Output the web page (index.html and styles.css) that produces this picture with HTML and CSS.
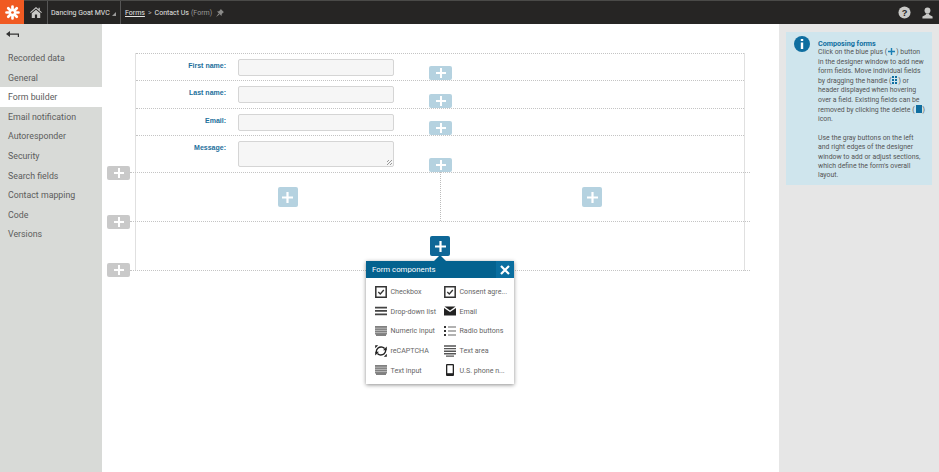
FILE: index.html
```html
<!DOCTYPE html>
<html lang="en">
<head>
    <meta charset="UTF-8">
    <title>Contact Us (Form)</title>
    <link rel="stylesheet" href="styles.css">
</head>
<body>

<header class="topbar">
    <div class="logo">
        <svg width="15" height="15" viewBox="0 0 20 20"><g stroke="#fff" stroke-width="3.600" stroke-linecap="round"><path d="M10 2v16M2 10h16M4.300 4.300l11.400 11.400M15.700 4.300L4.300 15.700"/></g><circle cx="10" cy="10" r="1.800" fill="#f05a22"/></svg>
    </div>
    <div class="home">
        <svg width="12" height="11" viewBox="0 0 14 13"><path d="M7 0L0 6.200l.8.900L7 1.800l6.200 5.300.8-.9L11.500 4V1H10v1.700z" fill="#c9c9c7"/><path d="M2 7.500L7 3.200l5 4.300V13H8.300V9H5.700v4H2z" fill="#c9c9c7"/></svg>
    </div>
    <div class="site">Dancing Goat MVC <span class="caret"></span></div>
    <div class="crumbs">
        <a href="#">Forms</a>
        <span class="sep">&gt;</span>
        <span>Contact Us</span>
        <span class="muted">(Form)</span>
        <svg width="8" height="8" viewBox="0 0 8 8"><path d="M4.800 0L8 3.200 7.200 3.600 5.800 5 5.500 7 1 2.500 3 2.200 4.400.8zM2.500 4.500L3.500 5.500 0 8z" fill="#8a8a88"/></svg>
    </div>
    <div class="top-icons">
        <svg width="13" height="13" viewBox="0 0 14 14"><circle cx="7" cy="7" r="6.500" fill="#c9c9c7"/><text x="7" y="10.500" class="q-mark">?</text></svg>
        <svg width="11" height="12" viewBox="0 0 13 14"><circle cx="6.500" cy="4" r="3.500" fill="#c9c9c7"/><path d="M4.500 7.500h4v1.500l4 2v2.500H.5V11l4-2z" fill="#c9c9c7"/></svg>
    </div>
</header>

<div class="page">
    <nav class="sidebar">
        <div class="back">
            <svg width="13" height="8" viewBox="0 0 13 8"><path d="M4 0L0 3l4 3V3.800h7.800V6H13V2.600H4z" fill="#333"/></svg>
        </div>
        <a href="#">Recorded data</a>
        <a href="#">General</a>
        <a href="#" class="active">Form builder</a>
        <a href="#">Email notification</a>
        <a href="#">Autoresponder</a>
        <a href="#">Security</a>
        <a href="#">Search fields</a>
        <a href="#">Contact mapping</a>
        <a href="#">Code</a>
        <a href="#">Versions</a>
    </nav>

    <main class="designer">
        <div class="canvas">
            <div class="field h27">
                <label>First name:</label><div class="input"></div>
                <button class="plus light field-plus"><svg class="ico-plus" viewBox="0 0 10 10"><path d="M4 0h2v4h4v2H6v4H4V6H0V4h4z"/></svg></button>
            </div>
            <div class="field h27">
                <label>Last name:</label><div class="input"></div>
                <button class="plus light field-plus"><svg class="ico-plus" viewBox="0 0 10 10"><path d="M4 0h2v4h4v2H6v4H4V6H0V4h4z"/></svg></button>
            </div>
            <div class="field h27">
                <label>Email:</label><div class="input"></div>
                <button class="plus light field-plus"><svg class="ico-plus" viewBox="0 0 10 10"><path d="M4 0h2v4h4v2H6v4H4V6H0V4h4z"/></svg></button>
            </div>
            <div class="field h37">
                <label>Message:</label><div class="input area"><span class="grip"></span></div>
                <button class="plus light field-plus"><svg class="ico-plus" viewBox="0 0 10 10"><path d="M4 0h2v4h4v2H6v4H4V6H0V4h4z"/></svg></button>
            </div>
            <div class="section two">
                <div class="zone"><button class="plus light tall"><svg class="ico-plus" viewBox="0 0 10 10"><path d="M4 0h2v4h4v2H6v4H4V6H0V4h4z"/></svg></button></div>
                <div class="zone split"><button class="plus light tall"><svg class="ico-plus" viewBox="0 0 10 10"><path d="M4 0h2v4h4v2H6v4H4V6H0V4h4z"/></svg></button></div>
                <button class="plus gray side s1"><svg class="ico-plus" viewBox="0 0 10 10"><path d="M4 0h2v4h4v2H6v4H4V6H0V4h4z"/></svg></button>
            </div>
            <div class="section one">
                <button class="plus dark tall"><svg class="ico-plus" viewBox="0 0 10 10"><path d="M4 0h2v4h4v2H6v4H4V6H0V4h4z"/></svg></button>
                <button class="plus gray side s2"><svg class="ico-plus" viewBox="0 0 10 10"><path d="M4 0h2v4h4v2H6v4H4V6H0V4h4z"/></svg></button>
                <button class="plus gray side s3"><svg class="ico-plus" viewBox="0 0 10 10"><path d="M4 0h2v4h4v2H6v4H4V6H0V4h4z"/></svg></button>
            </div>

            <div class="popup">
                <div class="popup-head">
                    <span>Form components</span>
                    <div class="popup-close"><svg width="10" height="10" viewBox="0 0 10 10"><path d="M1 1l8 8M9 1L1 9" stroke="#fff" stroke-width="2.200"/></svg></div>
                </div>
                <div class="popup-grid">
                    <div class="comp"><svg viewBox="0 0 12 12"><path d="M.8.800h10.400v10.400H.8z" fill="none" stroke="#333" stroke-width="1.500"/><path d="M3.300 6l2 2 3.500-4" fill="none" stroke="#333" stroke-width="1.300"/></svg>Checkbox</div>
                    <div class="comp"><svg viewBox="0 0 12 12"><path d="M.8.800h10.400v10.400H.8z" fill="none" stroke="#333" stroke-width="1.500"/><path d="M3.300 6l2 2 3.500-4" fill="none" stroke="#333" stroke-width="1.300"/></svg>Consent agre...</div>
                    <div class="comp"><svg viewBox="0 0 12 12"><path d="M0 1.800h12v1.700H0zM0 5.100h12v1.700H0zM0 8.500h12v1.700H0z" fill="#444"/></svg>Drop-down list</div>
                    <div class="comp"><svg viewBox="0 0 12 12"><path d="M0 3l6 4 6-4v7.500H0z" fill="#222"/><path d="M.5 1.500h11L6 5.500z" fill="#222"/></svg>Email</div>
                    <div class="comp"><svg viewBox="0 0 12 12"><path d="M0 1h12v8.500H0zM1 9.500h10V11H1z" fill="#808080"/><path d="M0 3.200h12M0 5.400h12M0 7.600h12" stroke="#ddd" stroke-width=".6"/></svg>Numeric input</div>
                    <div class="comp"><svg viewBox="0 0 12 12"><path d="M0 1h2v2H0zM0 5h2v2H0zM0 9h2v2H0z" fill="#333"/><path d="M4 1.500h8v1H4zM4 5.500h8v1H4zM4 9.500h8v1H4z" fill="#666"/></svg>Radio buttons</div>
                    <div class="comp"><svg viewBox="0 0 12 12"><g fill="none" stroke="#222" stroke-width="1.400"><path d="M1.300 7.200C1.100 4 3.600 1.600 7.200 2.100 8.300 2.300 9 2.800 9.600 3.400"/><path d="M10.700 4.800c.2 3.200-2.300 5.600-5.900 5.100-1.100-.2-1.800-.7-2.400-1.300"/></g><path d="M8 5.200h3.800V1.400zM4 6.800H.2v3.800zM.2.200h3l-3 3zM11.800 11.800h-3l3-3z" fill="#222"/></svg>reCAPTCHA</div>
                    <div class="comp"><svg viewBox="0 0 12 12"><path d="M0 .3h12v1.400H0zM0 2.900h12v1.400H0zM0 5.500h12v1.400H0zM0 8.100h12v1.400H0zM2 10.500h8v1.300H2z" fill="#555"/></svg>Text area</div>
                    <div class="comp"><svg viewBox="0 0 12 12"><path d="M0 1h12v8.500H0zM1 9.500h10V11H1z" fill="#808080"/><path d="M0 3.200h12M0 5.400h12M0 7.600h12" stroke="#ddd" stroke-width=".6"/></svg>Text input</div>
                    <div class="comp"><svg viewBox="0 0 12 12"><path d="M3 0h6a1 1 0 0 1 1 1v10a1 1 0 0 1-1 1H3a1 1 0 0 1-1-1V1a1 1 0 0 1 1-1z" fill="#222"/><path d="M3.300 1.300h5.400v7.900H3.300z" fill="#fff"/></svg>U.S. phone n...</div>
                </div>
            </div>
        </div>
    </main>

    <aside class="help-col">
        <div class="help">
            <div class="info-dot">
                <svg width="16" height="16" viewBox="0 0 16 16"><circle cx="8" cy="8" r="8" fill="#0f6ea0"/><path d="M6.800 3h2.400v2H6.800zM6.800 6.500h2.400V13H6.800z" fill="#fff"/></svg>
            </div>
            <div class="help-text">
                <h4>Composing forms</h4>
                <p>Click on the blue plus (<svg class="inline-ico" width="7" height="7" viewBox="0 0 10 10"><path d="M4 0h2v4h4v2H6v4H4V6H0V4h4z" fill="#1b7fb5"/></svg>) button<br>
                in the designer window to add new<br>
                form fields. Move individual fields<br>
                by dragging the handle (<svg class="inline-ico" width="5" height="8" viewBox="0 0 5 8"><path d="M0 0h2v2H0zM3 0h2v2H3zM0 3h2v2H0zM3 3h2v2H3zM0 6h2v2H0zM3 6h2v2H3z" fill="#0f6ea0"/></svg>) or<br>
                header displayed when hovering<br>
                over a field. Existing fields can be<br>
                removed by clicking the delete (<svg class="inline-ico" width="6" height="8" viewBox="0 0 6 8"><path d="M0 0h6v8H0z" fill="#0f6ea0"/></svg>)<br>
                icon.</p>
                <p>Use the gray buttons on the left<br>
                and right edges of the designer<br>
                window to add or adjust sections,<br>
                which define the form's overall<br>
                layout.</p>
            </div>
        </div>
    </aside>
</div>

</body>
</html>
```

FILE: styles.css
```css
* { box-sizing: border-box; }
html, body { height: 100%; }
body {
    margin: 0;
    font-family: Roboto, "Open Sans", sans-serif;
    background: #fff;
    overflow: hidden;
}

/* top bar */
.topbar {
    height: 24px;
    display: flex;
    align-items: stretch;
    background: #262524;
    border-top: 1px solid #4a4a48;
    color: #e4e4e2;
    font-size: 7px;
}
.logo {
    width: 24px;
    margin-top: -1px;
    background: #f05a22;
    display: flex;
    align-items: center;
    justify-content: center;
}
.home {
    width: 24px;
    display: flex;
    align-items: center;
    justify-content: center;
    border-right: 1px solid #555;
}
.site {
    width: 73px;
    padding-left: 3px;
    display: flex;
    align-items: center;
    gap: 2px;
    border-right: 1px solid #555;
    white-space: nowrap;
}
.caret {
    width: 0;
    height: 0;
    margin-top: 3px;
    border-left: 4px solid transparent;
    border-bottom: 4px solid #999;
}
.crumbs {
    display: flex;
    align-items: center;
    gap: 2px;
    padding-left: 4px;
}
.crumbs a { color: #e4e4e2; }
.crumbs .sep { color: #aaa; padding: 0 1px; }
.crumbs .muted { color: #9a9a98; }
.crumbs svg { margin-left: 2px; }
.top-icons {
    margin-left: auto;
    display: flex;
    align-items: center;
    gap: 11px;
    padding-right: 6px;
}
.q-mark {
    font-size: 10px;
    font-weight: 700;
    fill: #262524;
    text-anchor: middle;
    font-family: "Liberation Sans", sans-serif;
}

.page {
    display: flex;
    height: calc(100% - 24px);
}

/* left menu */
.sidebar {
    width: 102px;
    background: #d8dad7;
    flex-shrink: 0;
}
.back {
    height: 24px;
    padding: 7px 0 0 6px;
}
.back svg { display: block; }
.sidebar a {
    display: block;
    height: 19.600px;
    line-height: 20px;
    padding-left: 8px;
    font-size: 8.800px;
    color: #5c5c5c;
    text-decoration: none;
}
.sidebar a.active { background: #fff; }

/* designer */
.designer {
    flex: 1;
    padding: 29px 34px 0 33px;
}
.canvas {
    position: relative;
    width: 610px;
    border-left: 1px solid #e0e0e0;
    border-right: 1px solid #e0e0e0;
}
.field {
    position: relative;
    display: flex;
    gap: 12px;
    padding-top: 5px;
    border-top: 1px dotted #c4c4c4;
}
.h27 { height: 27.400px; }
.h37 { height: 37px; }
.field label {
    width: 90px;
    text-align: right;
    font-family: "Liberation Sans", sans-serif;
    font-size: 7px;
    font-weight: 700;
    color: #1c6f9c;
    padding-top: 3px;
}
.input {
    width: 156px;
    height: 17px;
    background: #f6f6f6;
    border: 1.500px solid #d5d5d5;
    border-radius: 2px;
}
.area {
    height: 26px;
    position: relative;
}
.grip {
    position: absolute;
    right: 1px;
    bottom: 1px;
    width: 5px;
    height: 5px;
    background: repeating-linear-gradient(135deg, transparent 0 1px, #999 1px 2px);
}
.plus {
    padding: 0;
    border: 0;
    display: flex;
    align-items: center;
    justify-content: center;
    width: 23px;
    height: 14px;
    border-radius: 2px;
}
.ico-plus { width: 10px; height: 10px; fill: #fff; }
.light { background: #b5d2e0; }
.gray { background: #c9c9c9; }
.dark { background: #0e6797; }
.tall { width: 20px; height: 20px; }
.tall .ico-plus { width: 11px; height: 11px; }
.field-plus {
    position: absolute;
    left: 293px;
    bottom: 0;
}
.section {
    position: relative;
}
/* section lines run a little past the canvas on both sides */
.section::before {
    content: "";
    position: absolute;
    top: 0;
    left: -6px;
    right: -6px;
    border-top: 1px dotted #c4c4c4;
}
.section.two {
    display: flex;
    height: 49px;
}
.section.one {
    height: 49.500px;
    display: flex;
    align-items: flex-start;
    justify-content: center;
    padding-top: 15px;
}
.section.one::after {
    content: "";
    position: absolute;
    bottom: 0;
    left: -6px;
    right: -6px;
    border-top: 1px dotted #c4c4c4;
}
.zone {
    flex: 1;
    display: flex;
    justify-content: center;
    padding-top: 15px;
}
.split { border-left: 1px dotted #bbb; }
.side {
    position: absolute;
    left: -29px;
    z-index: 1;
}
.s1 { top: -6px; }
.s2 { top: -6px; }
.s3 { bottom: -6px; }

/* components popup */
.popup {
    position: absolute;
    left: 230px;
    top: 208px;
    width: 148px;
    height: 123px;
    background: #fff;
    box-shadow: 0 1px 4px rgba(0, 0, 0, 0.45);
}
.popup::before {
    content: "";
    position: absolute;
    left: 68px;
    top: -6px;
    border-left: 6px solid transparent;
    border-right: 6px solid transparent;
    border-bottom: 6px solid #04628f;
}
.popup-head {
    height: 17px;
    background: #04628f;
    color: #fff;
    font-size: 7.800px;
    display: flex;
    align-items: center;
    justify-content: space-between;
    padding-left: 6px;
}
.popup-close {
    width: 18px;
    height: 17px;
    background: #0a6e9f;
    display: flex;
    align-items: center;
    justify-content: center;
}
.popup-grid {
    display: grid;
    grid-template-columns: 69px 69px;
    grid-auto-rows: 19.600px;
    padding: 4px 0 0 9px;
}
.comp {
    display: flex;
    align-items: center;
    gap: 3.500px;
    font-size: 7.100px;
    color: #666;
    white-space: nowrap;
}
.comp svg {
    width: 12px;
    height: 12px;
    flex-shrink: 0;
}

/* help column */
.help-col {
    width: 160px;
    flex-shrink: 0;
    background: #e6e6e6;
    padding: 8px 7px 0;
}
.help {
    display: flex;
    gap: 8px;
    height: 153px;
    background: #cfe5ed;
    padding: 4px 0 0 8px;
}
.info-dot { flex-shrink: 0; }
.help-text {
    font-size: 6.900px;
    line-height: 9.300px;
    color: #555;
    padding-top: 3px;
    white-space: nowrap;
}
.help-text h4 {
    margin: 0;
    font-size: 7.200px;
    font-weight: 700;
    color: #0f6ea0;
}
.help-text p { margin: 0 0 9.300px; }
.inline-ico { vertical-align: -1px; margin: 0 1px; }
```
